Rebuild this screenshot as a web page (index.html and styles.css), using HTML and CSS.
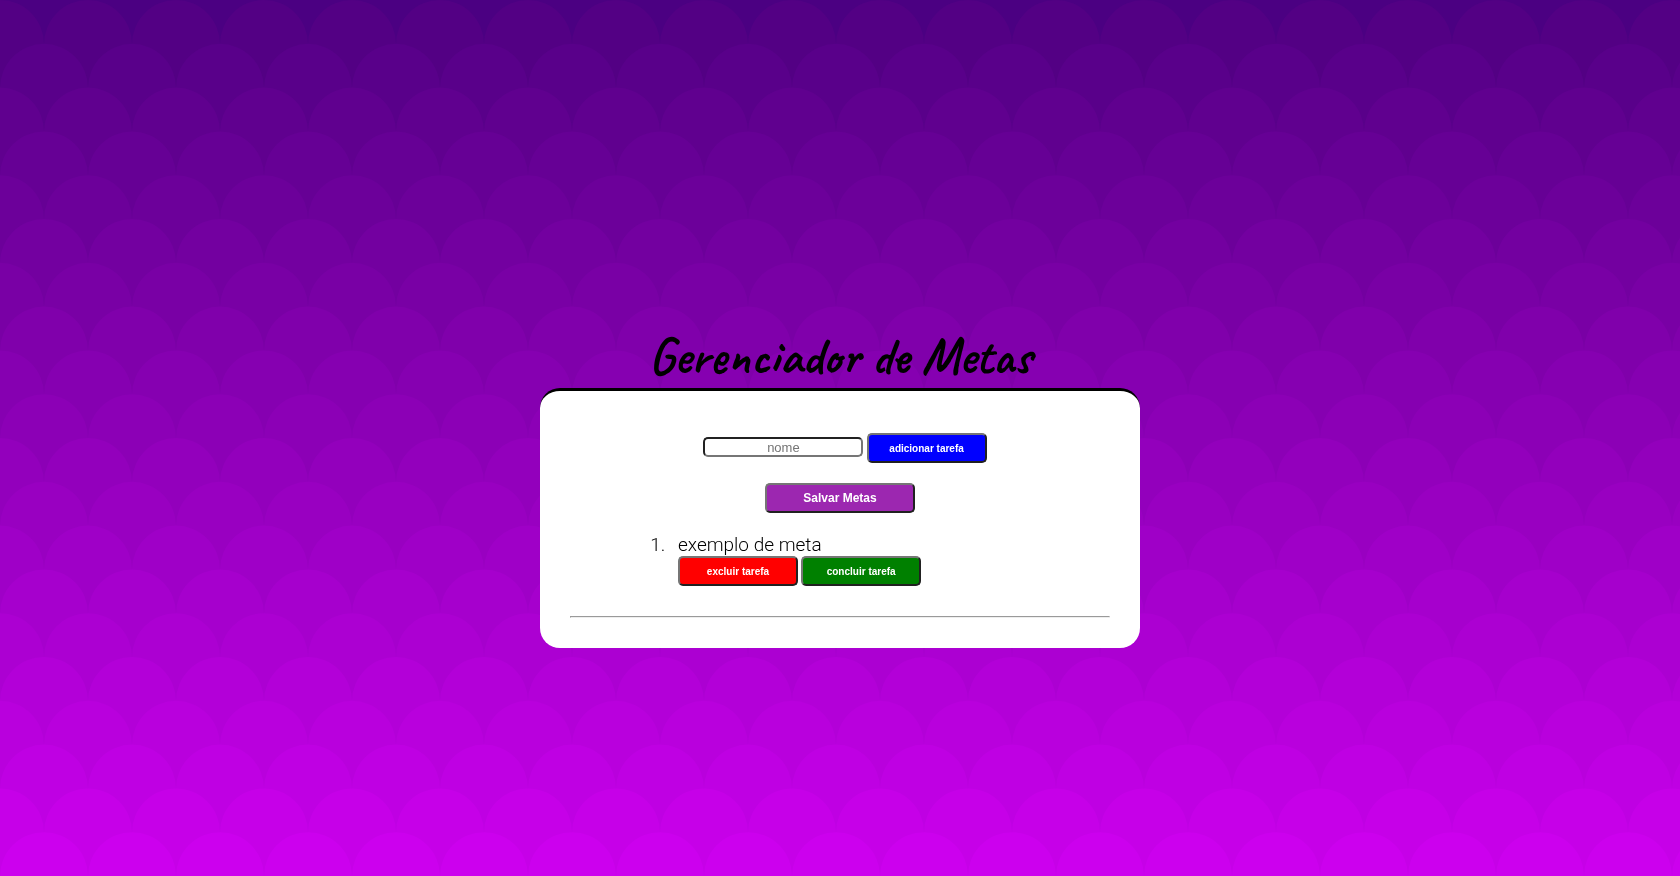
FILE: index.html
```
<!DOCTYPE html>
<html lang="pt-br">
	<head>
		<meta charset="UTF-8">
		<title>Gerenciador de Metas</title>
		<link rel="stylesheet" href="styles.css">
	</head>
	
	<body>
		<svg class="scales" id="scales" aria-hidden="true"></svg>
		
		<h1>Gerenciador de Metas</h1>
		
		<main>
			<form>
				<div class="add">
					<input type="text" id="nome" placeholder="nome" aria-label="nome">
					<button type="button" class="blue">adicionar tarefa</button>
				</div>
				<button type="button" class="save">Salvar Metas</button>
			</form>
			
			<ol>
				<li>
					exemplo de meta
					<div class="actions">
						<button type="button" class="red">excluir tarefa</button>
						<button type="button" class="green">concluir tarefa</button>
					</div>
				</li>
			</ol>
			
			<hr>
		</main>
		
		<script src="scales.js"></script>
	</body>
</html>
```

FILE: styles.css
```
html, body, h1, ol {
	margin: 0;
	padding: 0;
}
body {
	box-sizing: border-box;
	display: flex;
	flex-direction: column;
	align-items: center;
	justify-content: center;
	min-height: 100vh;
	padding-top: 100px;
	background: #4B0082;
	font-family: Roboto, sans-serif;
	font-weight: 300;
	font-size: 13px;
}
.scales {
	position: fixed;
	top: 0;
	left: 0;
	z-index: -1;
	width: 100%;
	height: 100%;
}
.scales line {
	stroke-width: 88px;
	stroke-linecap: round;
	stroke-dasharray: 0 88;
	transform: translateY(44px);
}
h1 {
	padding-bottom: 4px;
	font-family: Caveat, cursive;
	font-weight: bold;
	font-size: 51px;
	line-height: 56px;
}
main {
	box-sizing: border-box;
	width: 600px;
	max-width: 100%;
	padding: 42px 30px 30px;
	border-top: 3px solid #000000;
	border-radius: 20px;
	background: #FFFFFF;
}
form {
	text-align: center;
}
.add {
	margin-bottom: 20px;
	padding-left: 10px;
}
input {
	box-sizing: border-box;
	width: 160px;
	height: 20px;
	border-radius: 5px;
	font: 13px "Liberation Sans", sans-serif;
	text-align: center;
}
button {
	width: 120px;
	height: 30px;
	border: 2px outset #767676;
	border-radius: 5px;
	color: #FFFFFF;
	font: bold 10px "Liberation Sans", sans-serif;
}
.blue {
	background: #0000FF;
}
.save {
	display: block;
	width: 150px;
	margin: 0 auto 20px;
	background: #9C27B0;
	font-size: 12px;
}
.red {
	background: #FF0000;
}
.green {
	background: #008000;
}
ol {
	margin-left: 100px;
}
li {
	padding-left: 8px;
	padding-bottom: 30px;
	font-size: 19px;
	line-height: 23px;
}
.actions {
	font-size: 13px;
}
hr {
	margin: 0;
}
```

FILE: scales.js
```
// Rows of overlapping circles, from indigo at the top to magenta at the bottom
var svg = document.getElementById("scales");
var ROWS = 20;
for (var i = 0; i < ROWS; i++) {
	var t = i / (ROWS - 1);
	var y = i * 100 / ROWS + "%";
	var line = document.createElementNS("http://www.w3.org/2000/svg", "line");
	line.setAttribute("x1", i % 2 * 44);
	line.setAttribute("x2", 8000);
	line.setAttribute("y1", y);
	line.setAttribute("y2", y);
	line.setAttribute("stroke", "rgb(" + Math.round(83 + 121 * t) + ",0," + Math.round(132 + 106 * t) + ")");
	svg.appendChild(line);
}
```
